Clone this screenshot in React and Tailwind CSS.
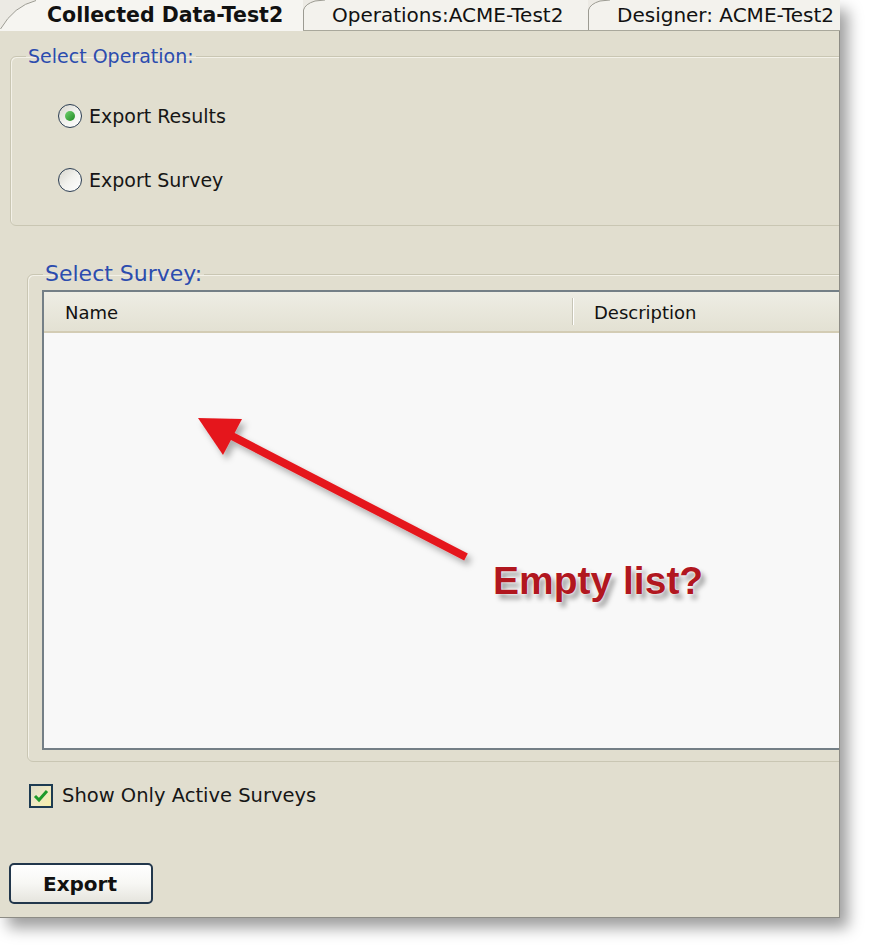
import React from "react";

const font = { fontFamily: '"DejaVu Sans", Verdana, sans-serif' };

function Radio({ checked }) {
  return (
    <div className="w-[24px] h-[24px] rounded-full border-[1.5px] border-[#2b3d52] bg-gradient-to-br from-[#d6d5cc] via-[#f2f2ee] to-white flex items-center justify-center">
      {checked && (
        <div className="w-[10px] h-[10px] rounded-full bg-gradient-to-br from-[#6fd36f] to-[#1e8a22]" />
      )}
    </div>
  );
}

export default function App() {
  return (
    <div className="relative w-[872px] h-[950px] bg-white overflow-hidden" style={font}>
      <div className="w-[840px] flex flex-col shadow-[8px_10px_14px_rgba(0,0,0,0.38)]">
        {/* Tabs */}
        <div className="flex h-[31px] bg-[#eceae4] overflow-hidden">
          <div className="flex w-[303px] h-[31px]">
            <svg width="36" height="31" className="shrink-0">
              <path d="M0 31 L0 29 Q14 6 36 0 L36 31 Z" fill="#f6f5f1" />
              <path d="M0.5 29 Q14 6 36 0.5" fill="none" stroke="#9c9b92" strokeWidth="1" />
            </svg>
            <div className="flex-1 bg-[#f6f5f1] flex items-center pl-[11px] text-[20.5px] font-bold text-[#111] leading-none whitespace-nowrap">
              Collected Data-Test2
            </div>
          </div>
          <div className="flex w-[285px] h-[31px] border-b border-[#a9a89c]">
            <svg width="22" height="30" className="shrink-0">
              <path d="M0.5 30 L0.5 10 Q2 4 12 1 L22 0 L22 30 Z" fill="#f3f2ed" />
              <path d="M0.5 30 L0.5 10 Q2 4 12 1 L22 0" fill="none" stroke="#9c9b92" strokeWidth="1" />
            </svg>
            <div className="flex-1 bg-[#f3f2ed] flex items-center pl-[7px] text-[20px] text-[#111] leading-none whitespace-nowrap">
              Operations:ACME-Test2
            </div>
          </div>
          <div className="flex flex-1 h-[31px] border-b border-[#a9a89c] overflow-hidden">
            <svg width="22" height="30" className="shrink-0">
              <path d="M0.5 30 L0.5 10 Q2 4 12 1 L22 0 L22 30 Z" fill="#f3f2ed" />
              <path d="M0.5 30 L0.5 10 Q2 4 12 1 L22 0" fill="none" stroke="#9c9b92" strokeWidth="1" />
            </svg>
            <div className="flex-1 bg-[#f3f2ed] flex items-center pl-[7px] text-[20px] text-[#111] leading-none whitespace-nowrap">
              Designer: ACME-Test2
            </div>
          </div>
        </div>

        {/* Panel */}
        <div className="h-[887px] bg-[#e1decf] border-r border-b border-[#8d8c85] overflow-hidden">
          {/* Group 1 */}
          <div className="w-[900px] pl-[10px] pt-[14px]">
            <fieldset className="w-[860px] h-[181px] border border-[#c9c6b3] rounded-[6px] shadow-[inset_1px_1px_0_#f3f1e8]">
              <legend className="ml-[15px] px-[2px] text-[19px] leading-[22px] text-[#2c4cae]">Select Operation:</legend>
              <div className="ml-[47px] mt-[37px] flex flex-col gap-[40px]">
                <div className="flex items-center gap-[7px] h-[24px]">
                  <Radio checked />
                  <span className="text-[19px] text-[#161616] leading-none">Export Results</span>
                </div>
                <div className="flex items-center gap-[7px] h-[24px]">
                  <Radio />
                  <span className="text-[19px] text-[#161616] leading-none">Export Survey</span>
                </div>
              </div>
            </fieldset>
          </div>

          {/* Group 2 */}
          <div className="w-[900px] pl-[27px] pt-[35px]">
            <fieldset className="w-[860px] h-[501px] border border-[#c9c6b3] rounded-[6px] shadow-[inset_1px_1px_0_#f3f1e8]">
              <legend className="ml-[15px] px-[2px] text-[22px] leading-[26px] text-[#2c4cae]">Select Survey:</legend>
              <div className="ml-[14px] mt-[3px] w-[840px] h-[460px] border-2 border-[#747f86] bg-[#f8f8f8] flex flex-col">
                <div className="h-[41px] shrink-0 flex bg-gradient-to-b from-[#eeede4] to-[#e3e1d3] border-b-2 border-[#d3ccb4]">
                  <div className="w-[529px] flex items-center pl-[21px] pt-[2px] text-[18px] text-[#111] leading-none border-r border-[#c7c5b6] my-[6px]">
                    Name
                  </div>
                  <div className="w-px my-[6px] bg-white" />
                  <div className="flex-1 flex items-center pl-[20px] pt-[2px] text-[18px] text-[#111] leading-none">
                    Description
                  </div>
                </div>
                <div className="flex-1" />
              </div>
            </fieldset>
          </div>

          {/* Checkbox */}
          <div className="ml-[29px] mt-[22px] flex items-center gap-[9px] h-[24px]">
            <div className="w-[24px] h-[24px] border-2 border-[#1d3b52] bg-gradient-to-br from-[#dcdac8] via-[#efe9c4] to-[#f7efa8] flex items-center justify-center">
              <svg width="16" height="14" viewBox="0 0 16 14">
                <path d="M2 7 L6 11 L14 2" fill="none" stroke="#1f9a2a" strokeWidth="3" strokeLinejoin="miter" />
              </svg>
            </div>
            <span className="text-[19.5px] text-[#161616] leading-none">Show Only Active Surveys</span>
          </div>

          {/* Export button */}
          <button className="ml-[9px] mt-[55px] w-[144px] h-[41px] border-2 border-[#22374c] rounded-[5px] bg-gradient-to-b from-white via-[#f7f7f4] to-[#e6e5de] text-[20px] font-bold text-[#111] leading-none flex items-center justify-center pr-[2px]">
            Export
          </button>
        </div>
      </div>

      {/* Annotation overlay */}
      <svg className="absolute left-0 top-0 pointer-events-none" width="872" height="950">
        <defs>
          <filter id="sh" x="-20%" y="-20%" width="140%" height="140%">
            <feDropShadow dx="4" dy="5" stdDeviation="3" floodColor="#000" floodOpacity="0.3" />
          </filter>
        </defs>
        <g filter="url(#sh)">
          <line x1="228" y1="434" x2="466" y2="557" stroke="#e5181e" strokeWidth="8" />
          <polygon points="198,418 242,419 223,455" fill="#e5181e" />
        </g>
      </svg>
      <div
        className="absolute left-[493px] top-[561px] text-[39px] font-bold leading-none text-[#b1171f] whitespace-nowrap [text-shadow:0_0_1px_#fff,0_0_2px_#fff,4px_5px_5px_rgba(0,0,0,0.35)]"
        style={{ fontFamily: '"Liberation Sans", Arial, sans-serif' }}
      >
        Empty list?
      </div>
    </div>
  );
}
